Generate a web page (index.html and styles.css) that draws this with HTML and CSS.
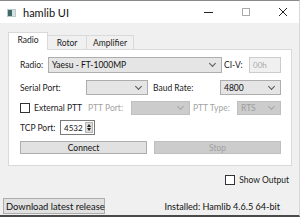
FILE: index.html
```html
<!DOCTYPE html>
<html>
<head>
<meta charset="utf-8">
<link rel="stylesheet" href="styles.css">
</head>
<body>
<div class="window">
  <div class="titlebar">
    <svg class="app-icon" width="9" height="8" viewBox="0 0 9 8">
      <rect x="0" y="0" width="9" height="8" fill="#b9c9c9"/>
      <rect x="1" y="1" width="4" height="6" fill="#3f6a68"/>
      <rect x="5" y="1" width="3" height="6" fill="#d7e1e1"/>
    </svg>
    <span class="title">hamlib UI</span>
    <div class="win-controls">
      <svg class="ctl" width="10" height="10" viewBox="0 0 10 10"><line x1="0" y1="5.5" x2="9" y2="5.5" stroke="#222" stroke-width="1"/></svg>
      <svg class="ctl" width="10" height="10" viewBox="0 0 10 10"><rect x="1.5" y="1.5" width="7" height="7" fill="none" stroke="#aaa" stroke-width="1"/></svg>
      <svg class="ctl" width="10" height="10" viewBox="0 0 10 10"><path d="M1 1 L9 9 M9 1 L1 9" stroke="#222" stroke-width="1"/></svg>
    </div>
  </div>
  <div class="content">
    <div class="tabs">
      <div class="tab active">Radio</div>
      <div class="tab">Rotor</div>
      <div class="tab">Amplifier</div>
    </div>
    <div class="panel">
      <div class="row r1">
        <span class="lbl w28">Radio:</span>
        <div class="combo w174"><span>Yaesu - FT-1000MP</span><i class="chev"></i></div>
        <span class="lbl w25 ml2">CI-V:</span>
        <div class="input dis w32">00h</div>
      </div>
      <div class="row r2">
        <span class="lbl w66">Serial Port:</span>
        <div class="combo w62"><span></span><i class="chev"></i></div>
        <span class="lbl w67 ml5">Baud Rate:</span>
        <div class="combo w61"><span>4800</span><i class="chev"></i></div>
      </div>
      <div class="row r3">
        <span class="check"></span>
        <span class="lbl w54 ml4">External PTT</span>
        <span class="lbl dim w43">PTT Port:</span>
        <div class="combo dis w59"><span></span><i class="chev"></i></div>
        <span class="lbl dim w44 ml3">PTT Type:</span>
        <div class="combo dis w44"><span>RTS</span><i class="chev"></i></div>
      </div>
      <div class="row r4">
        <span class="lbl w40">TCP Port:</span>
        <div class="spin"><span>4532</span><span class="arrows"><i class="up"></i><i class="down"></i></span></div>
      </div>
      <div class="row r5">
        <div class="btn">Connect</div>
        <div class="btn dis">Stop</div>
      </div>
    </div>
    <div class="show-row">
      <span class="check"></span>
      <span class="show-lbl">Show Output</span>
    </div>
    <div class="footer">
      <div class="dl-btn">Download latest release</div>
      <span class="installed">Installed: Hamlib 4.6.5 64-bit</span>
    </div>
  </div>
</div>
</body>
</html>
```
FILE: styles.css
```css
* { box-sizing: border-box; }
html, body { margin: 0; padding: 0; }
body {
  width: 300px;
  height: 217px;
  overflow: hidden;
  font-family: Lato, "Noto Sans", sans-serif;
  color: #1a1a1a;
  background: #f0f0f0;
}
.window {
  width: 300px;
  height: 217px;
  display: flex;
  flex-direction: column;
  border-top: 1px solid #8a8a8a;
  border-bottom: 2px solid #4a4a4a;
  border-right: 1px solid #d8d8d8;
}
.titlebar {
  height: 22px;
  background: #ffffff;
  display: flex;
  align-items: center;
  padding-left: 7px;
  flex-shrink: 0;
}
.app-icon { display: block; margin-top: 1px; }
.title {
  font-size: 11px;
  margin-left: 7px;
  color: #111;
}
.win-controls {
  margin-left: auto;
  display: flex;
  align-items: center;
}
.ctl { display: block; }
.ctl:nth-child(1) { margin-right: 27px; }
.ctl:nth-child(2) { margin-right: 27px; }
.ctl:nth-child(3) { margin-right: 11px; }

.content {
  flex: 1;
  display: flex;
  flex-direction: column;
  background: #f0f0f0;
  padding-top: 8px;
}
.tabs {
  display: flex;
  align-items: flex-end;
  margin-left: 8px;
  height: 18px;
  font-size: 8.5px;
}
.tab {
  height: 14px;
  border: 1px solid #d9d9d9;
  border-bottom: none;
  border-left: none;
  background: #f0f0f0;
  display: flex;
  align-items: center;
  justify-content: center;
  color: #222;
}
.tab:nth-child(2) { width: 39px; }
.tab:nth-child(3) { width: 47px; }
.tab.active {
  height: 18px;
  width: 40px;
  background: #ffffff;
  border-left: 1px solid #d9d9d9;
  padding-bottom: 3px;
  margin-bottom: -1px;
  position: relative;
  z-index: 1;
}
.panel {
  margin-left: 8px;
  width: 284px;
  height: 117px;
  background: #ffffff;
  border: 1px solid #d9d9d9;
  padding: 7px 10px 0 11px;
  font-size: 8.5px;
  display: flex;
  flex-direction: column;
}
.row { display: flex; align-items: center; flex-shrink: 0; }
.r1 { height: 16px; }
.r2 { height: 15px; margin-top: 7px; }
.r3 { height: 14px; margin-top: 6px; }
.r4 { height: 15px; margin-top: 5px; }
.r5 { height: 13px; margin-top: 6px; gap: 7px; }

.lbl { white-space: nowrap; color: #1a1a1a; flex-shrink: 0; }
.lbl.dim { color: #a3a3a3; }
.w25 { width: 25px; } .w28 { width: 28px; } .w32 { width: 32px; }
.w40 { width: 40px; } .w43 { width: 43px; } .w44 { width: 44px; }
.w54 { width: 54px; } .w59 { width: 59px; } .w61 { width: 61px; }
.w62 { width: 62px; } .w66 { width: 66px; } .w67 { width: 67px; }
.w174 { width: 174px; }
.ml2 { margin-left: 2px; } .ml3 { margin-left: 3px; }
.ml4 { margin-left: 4px; } .ml5 { margin-left: 5px; }

.combo {
  height: 100%;
  background: #e5e5e5;
  border: 1px solid #adadad;
  display: flex;
  align-items: center;
  padding-left: 3px;
  flex-shrink: 0;
  font-size: 8.5px;
  color: #111;
}
.combo span { flex: 1; }
.combo.dis { background: #cccccc; border-color: #bfbfbf; color: #9c9c9c; }
.chev {
  width: 5px;
  height: 5px;
  border-right: 1px solid #555;
  border-bottom: 1px solid #555;
  transform: rotate(45deg);
  margin: 0 6px 3px 0;
}
.combo.dis .chev { border-color: #a6a6a6; }
.input {
  height: 100%;
  flex-shrink: 0;
  border: 1px solid #cccccc;
  background: #f0f0f0;
  color: #a8a8a8;
  font-size: 8px;
  display: flex;
  align-items: center;
  padding-left: 3px;
}
.check {
  width: 10px;
  height: 10px;
  border: 1px solid #333;
  background: #fff;
  flex-shrink: 0;
}
.spin {
  width: 35px;
  height: 100%;
  border: 1px solid #7a7a7a;
  display: flex;
  align-items: center;
  padding-left: 3px;
  font-size: 8px;
  color: #111;
}
.spin span:first-child { flex: 1; }
.arrows {
  width: 8px;
  height: 11px;
  margin-right: 1px;
  background: #dcdcdc;
  border: 1px solid #b5b5b5;
  display: flex;
  flex-direction: column;
  align-items: center;
  justify-content: center;
  gap: 1px;
}
.up { width: 0; height: 0; border-left: 2.5px solid transparent; border-right: 2.5px solid transparent; border-bottom: 3px solid #222; }
.down { width: 0; height: 0; border-left: 2.5px solid transparent; border-right: 2.5px solid transparent; border-top: 3px solid #222; }

.btn {
  flex: 1;
  height: 100%;
  background: #e1e1e1;
  border: 1px solid #adadad;
  display: flex;
  align-items: center;
  justify-content: center;
  font-size: 8.5px;
  color: #111;
}
.btn.dis { background: #cccccc; border-color: #bfbfbf; color: #a0a0a0; }

.show-row {
  display: flex;
  align-items: center;
  justify-content: flex-end;
  margin-top: 9px;
  height: 10px;
  padding-right: 10px;
  font-size: 8.5px;
}
.show-lbl { margin-left: 4px; color: #1a1a1a; }

.footer {
  margin-top: auto;
  display: flex;
  align-items: center;
  height: 16px;
  margin-bottom: 1px;
  padding-left: 3px;
  padding-right: 19px;
}
.dl-btn {
  height: 16px;
  width: 102px;
  background: #e1e1e1;
  border: 1px solid #adadad;
  display: flex;
  align-items: center;
  padding-left: 2px;
  font-size: 9.4px;
  white-space: nowrap;
  color: #111;
}
.installed {
  margin-left: auto;
  font-size: 9.1px;
  white-space: nowrap;
  color: #111;
}
```
